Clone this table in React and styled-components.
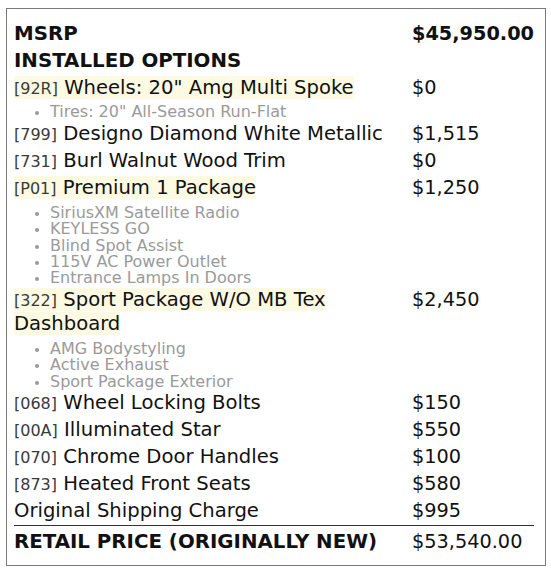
import styled, { createGlobalStyle } from "styled-components";

const GlobalStyle = createGlobalStyle`
  body {
    margin: 0;
    background: #fff;
    font-family: "DejaVu Sans", "Liberation Sans", sans-serif;
    color: #111;
  }
`;

const Page = styled.div`
  padding: 8px 0 0 6px;
`;

const Card = styled.div`
  width: 540px;
  height: 558px;
  box-sizing: border-box;
  border: 1.5px solid #7a7a7a;
  padding: 11px 11px 0 7px;
`;

const Row = styled.div`
  display: grid;
  grid-template-columns: 398px 1fr;
  padding: 1.5px 0;
  font-size: ${(props) => (props.bold ? "19.8px" : "19.6px")};
  line-height: 24px;
  font-weight: ${(props) => (props.bold ? 700 : 400)};

  &.total {
    border-top: 1px solid #333;
    padding-top: 4px;
  }
`;

const Label = styled.div`
  padding-right: 8px;
`;

const Name = styled.span`
  background: ${(props) => (props.highlight ? "#fcfae2" : "transparent")};
  box-decoration-break: clone;
`;

const Code = styled.span`
  font-size: 16px;
  line-height: 1;
  color: #3a3a3a;
`;

const Price = styled.div`
  font-size: 19.3px;
  font-weight: ${(props) => (props.bold ? 700 : 400)};
`;

const SubList = styled.ul`
  margin: 3.4px 0 0;
  padding: 0 0 0 36px;
  list-style: disc;
  color: #9a9a9a;
  font-size: 16px;
  line-height: 16.3px;

  li::marker {
    font-size: 13px;
  }
`;

const options = [
  {
    code: "92R",
    name: 'Wheels: 20" Amg Multi Spoke',
    price: "$0",
    highlight: true,
    items: ['Tires: 20" All-Season Run-Flat'],
  },
  { code: "799", name: "Designo Diamond White Metallic", price: "$1,515" },
  { code: "731", name: "Burl Walnut Wood Trim", price: "$0" },
  {
    code: "P01",
    name: "Premium 1 Package",
    price: "$1,250",
    highlight: true,
    items: [
      "SiriusXM Satellite Radio",
      "KEYLESS GO",
      "Blind Spot Assist",
      "115V AC Power Outlet",
      "Entrance Lamps In Doors",
    ],
  },
  {
    code: "322",
    name: "Sport Package W/O MB Tex Dashboard",
    price: "$2,450",
    highlight: true,
    items: ["AMG Bodystyling", "Active Exhaust", "Sport Package Exterior"],
  },
  { code: "068", name: "Wheel Locking Bolts", price: "$150" },
  { code: "00A", name: "Illuminated Star", price: "$550" },
  { code: "070", name: "Chrome Door Handles", price: "$100" },
  { code: "873", name: "Heated Front Seats", price: "$580" },
];

const App = () => {
  return (
    <Page>
      <GlobalStyle />
      <Card>
        <Row bold>
          <Label>MSRP</Label>
          <Price bold>$45,950.00</Price>
        </Row>
        <Row bold>
          <Label>INSTALLED OPTIONS</Label>
        </Row>
        {options.map((opt) => (
          <div key={opt.code}>
            <Row>
              <Label>
                <Name highlight={opt.highlight}>
                  <Code>[{opt.code}]</Code> {opt.name}
                </Name>
              </Label>
              <Price>{opt.price}</Price>
            </Row>
            {opt.items && (
              <SubList>
                {opt.items.map((item) => (
                  <li key={item}>{item}</li>
                ))}
              </SubList>
            )}
          </div>
        ))}
        <Row>
          <Label>Original Shipping Charge</Label>
          <Price>$995</Price>
        </Row>
        <Row bold className="total">
          <Label>RETAIL PRICE (ORIGINALLY NEW)</Label>
          <Price>$53,540.00</Price>
        </Row>
      </Card>
    </Page>
  );
};

export default App;
